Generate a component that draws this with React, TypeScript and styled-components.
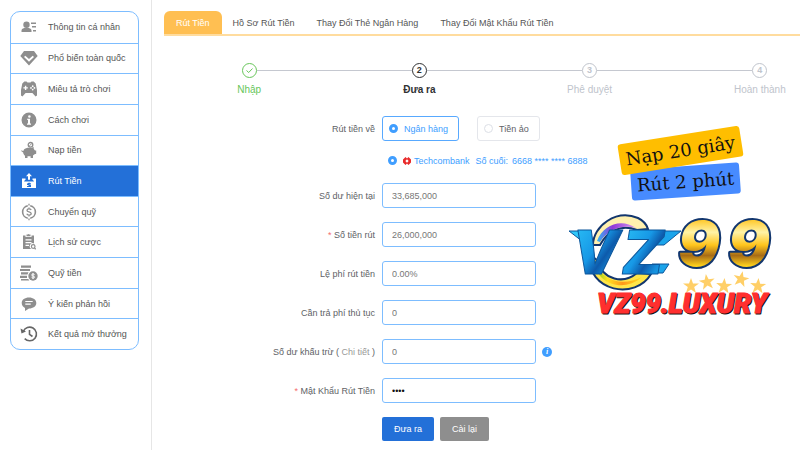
import React from "react";
import styled, { createGlobalStyle, css } from "styled-components";

const GlobalStyle = createGlobalStyle`
  *, *::before, *::after { box-sizing: border-box; }
  body {
    margin: 0;
    background: #fff;
    color: #606266;
    font: 9px/12px "Liberation Sans", Arial, sans-serif;
  }
  button, input { font: inherit; color: inherit; margin: 0; }
`;

const Page = styled.div`
  display: flex;
  min-height: 100vh;
  overflow: hidden;
`;

const Sidebar = styled.nav`
  flex: none;
  width: 152px;
  padding: 11px 12px 11px 10px;
  border-right: 1px solid #e6e6e6;
`;

const Menu = styled.ul`
  display: grid;
  grid-auto-rows: 1fr;
  min-height: 339px;
  margin: 0;
  padding: 0;
  list-style: none;
  border: 1px solid #7dbdff;
  border-radius: 10px;
  overflow: hidden;
`;

const MenuItem = styled.li`
  display: flex;
  & + & { border-top: 1px solid #7dbdff; }
`;

const MenuLink = styled.a<{ $active?: boolean }>`
  flex: 1;
  display: flex;
  align-items: center;
  gap: 10px;
  padding-left: 9px;
  text-decoration: none;
  white-space: nowrap;
  color: ${(p) => (p.$active ? "#fff" : "#555")};
  background: ${(p) => (p.$active ? "#2370d8" : "transparent")};
  svg { flex: none; width: 18px; height: 18px; color: ${(p) => (p.$active ? "#fff" : "#8e8e8e")}; }
`;

const Main = styled.main`
  flex: 1;
  min-width: 0;
  padding: 11px 0 0 12px;
`;

const Tabs = styled.div`
  display: flex;
  border-bottom: 2px solid #ffdc9e;
`;

const Tab = styled.button<{ $active?: boolean }>`
  height: 23px;
  padding: 0 ${(p) => (p.$active ? "12px" : "11px")};
  border: 0;
  border-radius: 6px 6px 0 0;
  white-space: nowrap;
  color: ${(p) => (p.$active ? "#fff" : "#555")};
  background: ${(p) => (p.$active ? "#ffbf52" : "transparent")};
`;

const Steps = styled.ol`
  display: grid;
  grid-template-columns: repeat(4, 1fr);
  margin: 27px -45px 0 0;
  padding: 0;
  list-style: none;
`;

type StepState = "done" | "current" | "waiting";
const stepColors: Record<StepState, string> = {
  done: "#67c65a",
  current: "#303133",
  waiting: "#c0c4cc",
};

const Step = styled.li<{ $state: StepState }>`
  display: grid;
  grid-template-columns: 1fr 15px 1fr;
  align-items: center;
  row-gap: 5px;
  color: ${(p) => stepColors[p.$state]};
  font-weight: ${(p) => (p.$state === "current" ? 700 : 400)};
  &::before, &::after { content: ""; height: 1px; background: #c5c8d0; }
  &::before { order: 0; }
  &::after { order: 2; }
  &:first-child::before, &:last-child::after { background: transparent; }
`;

const StepMark = styled.span`
  order: 1;
  display: grid;
  place-items: center;
  height: 15px;
  border: 1px solid;
  border-radius: 50%;
  font-weight: 700;
  line-height: 13px;
  svg { width: 9px; height: 9px; }
`;

const StepLabel = styled.span`
  order: 3;
  grid-column: 1 / -1;
  text-align: center;
  font-size: 10px;
  line-height: 14px;
`;

const Content = styled.div`
  display: flex;
  margin-top: 19px;
`;

const Form = styled.form`
  flex: 1;
  min-width: 0;
  display: flex;
  flex-direction: column;
  gap: 14px;
`;

const Row = styled.div`
  display: grid;
  grid-template-columns: 211px minmax(0, 1fr);
  column-gap: 7px;
  align-items: center;
`;

const Label = styled.label`
  text-align: right;
  white-space: nowrap;
`;

const Required = styled.span`
  color: #f56c6c;
`;

const DetailLink = styled.a`
  color: #999;
  text-decoration: none;
`;

const Field = styled.div`
  grid-column: 2;
  display: flex;
  align-items: center;
  gap: 6px;
`;

const Choices = styled(Field)`
  gap: 18px;
`;

const Input = styled.input`
  width: 154px;
  height: 25px;
  padding: 0 9px;
  border: 1px solid #7dbdff;
  border-radius: 3px;
  outline: 0;
  background: #fff;
  color: #777;
  &[type="password"] { color: #111; }
`;

const ChoiceBox = styled.label<{ $active?: boolean }>`
  display: flex;
  align-items: center;
  gap: 6px;
  height: 25px;
  padding: 0 10px 0 6px;
  border: 1px solid ${(p) => (p.$active ? "#58a9ff" : "#e4e6eb")};
  border-radius: 3px;
  white-space: nowrap;
  color: ${(p) => (p.$active ? "#409eff" : "#606266")};
`;

const Radio = styled.input`
  appearance: none;
  flex: none;
  width: 9px;
  height: 9px;
  border: 1px solid #dcdfe6;
  border-radius: 50%;
  background: #fff;
  &:checked { border: 3px solid #409eff; }
`;

const BankChoice = styled.label`
  grid-column: 2;
  display: flex;
  align-items: center;
  gap: 6px;
  padding-left: 6px;
  height: 13px;
  white-space: nowrap;
  color: #409eff;
`;

const BankName = styled.span`
  display: flex;
  align-items: center;
  gap: 3px;
  svg { width: 8px; height: 8px; }
`;

const Account = styled.span`
  display: flex;
  gap: 4px;
`;

const Method = styled.div`
  display: flex;
  flex-direction: column;
  gap: 13px;
  margin-bottom: 2px;
`;

const InfoButton = styled.button`
  display: grid;
  place-items: center;
  width: 10px;
  height: 10px;
  padding: 0;
  border: 0;
  border-radius: 50%;
  background: #409eff;
  color: #fff;
  font: italic 700 8px/10px "Liberation Serif", serif;
`;

const Button = styled.button<{ $tone: "primary" | "muted" }>`
  height: 24px;
  padding: 0 12px;
  border: 0;
  border-radius: 2px;
  color: #fff;
  background: ${(p) => (p.$tone === "primary" ? "#2370d8" : "#8e8e8e")};
`;

const Promo = styled.aside`
  flex: none;
  width: 240px;
  padding-top: 19px;
  display: flex;
  flex-direction: column;
  align-items: center;
  svg { width: 100%; display: block; margin-top: 7px; }
`;

const Ribbon = styled.div<{ $tone: "gold" | "blue" }>`
  padding: 0 6px;
  border-radius: 3px;
  color: #111;
  font: 18px/31px "DejaVu Serif", serif;
  white-space: nowrap;
  ${(p) =>
    p.$tone === "gold"
      ? css`background: #ffbe00; transform: rotate(-9deg); z-index: 1;`
      : css`background: #478bff; transform: rotate(-4deg); margin-left: 11px;`}
`;

const Glyph = ({ children }: { children: React.ReactNode }) => (
  <svg viewBox="0 0 18 18" fill="currentColor" aria-hidden="true">{children}</svg>
);

const line = { fill: "none", stroke: "currentColor" };

const menu: { label: string; icon: React.ReactNode; active?: boolean }[] = [
  {
    label: "Thông tin cá nhân",
    icon: <Glyph><circle cx="6.500" cy="6.700" r="3.200" /><path d="M1.500 14v-1.500c0-1.800 2-2.700 5-2.700s5 .9 5 2.700V14zM11 4.500h5V6h-5zM12 8h4v1.500h-4zM13 12h3v1.500h-3z" /></Glyph>,
  },
  {
    label: "Phổ biến toàn quốc",
    icon: <Glyph><path fillRule="evenodd" d="M4 2h10l3.700 5L9 16.500 .3 7zM5.300 6.700 4 8l5 4.800L14 8l-1.300-1.300L9 10z" /></Glyph>,
  },
  {
    label: "Miêu tả trò chơi",
    icon: <Glyph><path fillRule="evenodd" d="M4.300 1.500h2.200l1 1h3l1-1h2.200l2 1.900L17 10v5.600l-1.400.9-3.200-3.500H5.600l-3.200 3.500L1 15.600V10l1.300-6.600zM4.900 5.700v1.500H3.400v1.400h1.500v1.500h1.400V8.600h1.500V7.200H6.300V5.700zM12.700 5.300a.9.9 0 1 0 0 1.800.9.9 0 0 0 0-1.800zm0 3.400a.9.9 0 1 0 0 1.800.9.9 0 0 0 0-1.800zM11 7a.9.9 0 1 0 0 1.800A.9.9 0 0 0 11 7zm3.400 0a.9.9 0 1 0 0 1.800.9.9 0 0 0 0-1.800z" /></Glyph>,
  },
  {
    label: "Cách chơi",
    icon: <Glyph><path fillRule="evenodd" d="M9 1.500a7.500 7.500 0 1 1 0 15 7.500 7.500 0 0 1 0-15zm.4 2.700a1.300 1.300 0 1 0 0 2.600 1.300 1.300 0 0 0 0-2.600zM7 7.700v1.100h1V12.500H7v1.200h4v-1.200h-1V7.700z" /></Glyph>,
  },
  {
    label: "Nạp tiền",
    icon: <Glyph><path d="M4 8.500c1.500-1.800 5-2.300 7.500-1.500l2-1.200.3 2.200 1.200 1.500h1.200v3.200l-1.600.5-1.600 1.300V17h-2.400v-1.700H7.500V17H5v-2.300c-1.200-1-1.800-2.200-1.900-3.500-1 .1-1.700-.6-1.700-1.900h.8c.1.700.5 1 1.100.8z" /><circle cx="10.500" cy="3.800" r="2.300" {...line} strokeWidth="1.300" /><path d="m9.500 4.800 2-2" {...line} /></Glyph>,
  },
  {
    label: "Rút Tiền",
    active: true,
    icon: <Glyph><path fillRule="evenodd" d="M9 1 6 4.300h2v3.500h2V4.300h2zM2 6.500h3.500V8H5l-1 1.500h10L13 8h-.500V6.500H16V16H2zm7 4-2 1.200V13h1.500v1H7v1h4v-2H9.500v-.600H11v-1z" /></Glyph>,
  },
  {
    label: "Chuyển quỹ",
    icon: <Glyph><g {...line}><path strokeWidth="1.600" d="M7.800 2.800a6.300 6.300 0 0 0 0 12.400M10.200 2.800a6.300 6.300 0 0 1 0 12.400" /><path strokeWidth="1.300" d="M11.200 7c-.5-.9-1.200-1.100-2.200-1.100-1.200 0-2 .5-2 1.500 0 2 4.200 1.100 4.200 3.200 0 1-1 1.500-2.100 1.500-1.200 0-2-.5-2.300-1.300M9 4.500V6m0 6v1.500M9 .8v1.700m0 13v1.700" /></g></Glyph>,
  },
  {
    label: "Lịch sử cược",
    icon: <Glyph><path fillRule="evenodd" d="M3 2.500h2.500V4h6V2.500H14v8a3 3 0 0 0-2.500 5.500H3zM5.500 6.200v1.300h6V6.200zm0 2.800v1.300h6V9zm0 2.800V13H9v-1.200zM6.500 1.600h1.200a.9.9 0 0 1 1.600 0h1.200v1.700h-4z" /><circle cx="13.200" cy="13.500" r="1.800" {...line} strokeWidth="1.200" /><path d="m14.500 15 1.200 1.200" {...line} strokeWidth="1.300" /></Glyph>,
  },
  {
    label: "Quỹ tiền",
    icon: <Glyph><path d="M1 1.500h10v2.200H1zM0 4.900h10v2.200H0zM1 8.300h7.500L7.500 10.500H1zM0 11.700h7v2.200H0zM1 15h7.300l1 1.500H1z" /><circle cx="13" cy="12" r="4.700" /><path fill="none" stroke="#fff" d="M14.600 10.700c-.7-1-3-.9-3 .3 0 1.400 3 .7 3 2.100 0 1.200-2.400 1.200-3.100.1M13 9v6" /></Glyph>,
  },
  {
    label: "Ý kiến phản hồi",
    icon: <Glyph><path fillRule="evenodd" d="M9 2.500c4.200 0 7.300 2.300 7.300 5.500s-3.100 5.500-7.300 5.500L5 16v-3.100C3 12 1.700 10.200 1.700 8c0-3.200 3.100-5.500 7.300-5.500zM5.300 6v1.100h7.400V6zm0 2.600v1.100h5.400V8.600z" /></Glyph>,
  },
  {
    label: "Kết quả mở thưởng",
    icon: <Glyph><path fill="none" stroke="#666" strokeWidth="1.600" d="M3.300 6.500A6.800 6.800 0 1 1 4.700 13.600M9.500 5v4.300l3 2.200" /><path fill="#666" d="m.5 3.500 1 5L6 6.500z" /></Glyph>,
  },
];

const tabs = ["Rút Tiền", "Hồ Sơ Rút Tiền", "Thay Đổi Thẻ Ngân Hàng", "Thay Đổi Mật Khẩu Rút Tiền"];

const steps: { label: string; state: StepState }[] = [
  { label: "Nhập", state: "done" },
  { label: "Đưa ra", state: "current" },
  { label: "Phê duyệt", state: "waiting" },
  { label: "Hoàn thành", state: "waiting" },
];

const fields: { id: string; label: React.ReactNode; value: string; required?: boolean; type?: string; info?: boolean }[] = [
  { id: "balance", label: "Số dư hiện tại", value: "33,685,000" },
  { id: "amount", label: "Số tiền rút", value: "26,000,000", required: true },
  { id: "fee", label: "Lệ phí rút tiền", value: "0.00%" },
  { id: "charge", label: "Cần trả phí thủ tục", value: "0" },
  { id: "deduct", label: <>Số dư khấu trừ ( <DetailLink href="#detail">Chi tiết</DetailLink> )</>, value: "0", info: true },
  { id: "password", label: "Mật Khẩu Rút Tiền", value: "1234", required: true, type: "password" },
];

const star = "M0-8 2-2.500 8-2.500 3.200 1 5 7 0 3.500-5 7-3.200 1-8-2.500-2-2.500z";
const stars = [
  [131, 82, 0],
  [147, 78, -8],
  [164, 82, 4],
  [181, 75, 12],
  [198, 82, 4],
];

const BrandLogo = () => (
  <svg viewBox="0 0 240 120" role="img" aria-label="VZ99.LUXURY">
    <defs>
      <linearGradient id="blue" x1="0" y1="0" x2="1" y2="1">
        <stop offset="0" stopColor="#2fc9fa" />
        <stop offset=".45" stopColor="#1798e6" />
        <stop offset=".6" stopColor="#0d5aab" />
        <stop offset=".75" stopColor="#1590de" />
        <stop offset="1" stopColor="#20b8f3" />
      </linearGradient>
      <linearGradient id="gold" x1="0" y1="0" x2="0" y2="1">
        <stop offset=".15" stopColor="#ffbf12" />
        <stop offset=".35" stopColor="#fff3a6" />
        <stop offset=".52" stopColor="#ffc51c" />
        <stop offset=".66" stopColor="#a86c16" />
        <stop offset=".8" stopColor="#ffd21d" />
      </linearGradient>
      <linearGradient id="ringTop" x1="0" x2="1">
        <stop offset="0" stopColor="#31b4f4" />
        <stop offset=".4" stopColor="#9138d8" />
        <stop offset="1" stopColor="#d89af0" />
      </linearGradient>
      <linearGradient id="ringBottom" x1="0" x2="1">
        <stop offset="0" stopColor="#62c61c" />
        <stop offset=".3" stopColor="#ffe022" />
        <stop offset=".6" stopColor="#ff981a" />
        <stop offset="1" stopColor="#ffe022" />
      </linearGradient>
    </defs>
    <path d="M33 41C33 22 56 5 78 14q8 4 10 11L77 26C62 20 48 26 40 41z" fill="#fff0ae" stroke="#12366e" strokeWidth="2" />
    <path d="M37 37C43 20 62 14 76 24 61 20 48 26 40 38z" fill="url(#ringTop)" />
    <path d="M29 50C27 89 76 96 91 70L77 69C64 80 43 77 37 56z" fill="#ffe54a" stroke="#12366e" strokeWidth="2" />
    <path d="M33 55C36 81 64 89 82 73 64 82 43 79 35 58z" fill="url(#ringBottom)" />
    <path d="M9 27h14l4 14z" fill="#2fc9fa" stroke="#0d579c" strokeLinejoin="round" />
    <path d="M98 27h23l-17 14H90z" fill="#1ba4ea" stroke="#0d579c" strokeLinejoin="round" />
    <path d="M92 60h17l-6 9H88z" fill="#1ba4ea" stroke="#0d579c" strokeLinejoin="round" />
    <g fontFamily="Inter" fontWeight="900" fontStyle="italic" strokeLinejoin="round">
      <g fontSize="60" fill="url(#blue)" stroke="#0d579c">
        <text x="12" y="70">V</text>
        <text x="62" y="70">Z</text>
      </g>
      <g fontSize="62" fill="url(#gold)" stroke="#12366e" strokeWidth="4" paintOrder="stroke">
        <text x="118" y="62">9</text>
        <text x="168" y="62">9</text>
      </g>
    </g>
    {stars.map(([x, y, r]) => (
      <path key={x} d={star} fill="#ffcf67" transform={`translate(${x} ${y}) rotate(${r})`} />
    ))}
    <g fontFamily="Roboto" fontWeight="900" fontStyle="italic" fontSize="27" strokeLinejoin="round">
      <text x="38" y="110" fill="#111" stroke="#111" aria-hidden="true">VZ99.LUXURY</text>
      <text x="37" y="109" fill="#ff2f2f" stroke="#ff2f2f">VZ99.LUXURY</text>
    </g>
  </svg>
);

export default function App() {
  return (
    <>
      <GlobalStyle />
      <Page>
        <Sidebar>
          <Menu>
            {menu.map((item) => (
              <MenuItem key={item.label}>
                <MenuLink href="#" $active={item.active}>
                  {item.icon}
                  {item.label}
                </MenuLink>
              </MenuItem>
            ))}
          </Menu>
        </Sidebar>
        <Main>
          <Tabs role="tablist">
            {tabs.map((label, i) => (
              <Tab key={label} type="button" role="tab" aria-selected={i === 0} $active={i === 0}>{label}</Tab>
            ))}
          </Tabs>
          <Steps>
            {steps.map((step, i) => (
              <Step key={step.label} $state={step.state}>
                <StepMark>
                  {step.state === "done" ? (
                    <svg viewBox="0 0 9 9" fill="none" stroke="currentColor"><path d="m1.500 4.500 2.200 2 3.800-4" /></svg>
                  ) : (
                    i + 1
                  )}
                </StepMark>
                <StepLabel>{step.label}</StepLabel>
              </Step>
            ))}
          </Steps>
          <Content>
            <Form onSubmit={(e) => e.preventDefault()}>
              <Method>
                <Row role="radiogroup" aria-labelledby="method-label">
                  <Label as="span" id="method-label">Rút tiền về</Label>
                  <Choices>
                    <ChoiceBox $active><Radio type="radio" name="method" defaultChecked />Ngân hàng</ChoiceBox>
                    <ChoiceBox><Radio type="radio" name="method" />Tiền ảo</ChoiceBox>
                  </Choices>
                </Row>
                <Row>
                  <BankChoice>
                    <Radio type="radio" name="bank" defaultChecked />
                    <BankName>
                      <svg viewBox="0 0 8 8" aria-hidden="true">
                        <path fill="#e92b2b" fillRule="evenodd" d="M2.500 0 4 1.500 5.500 0 8 2.500v3L5.500 8 4 6.500 2.500 8 0 5.500v-3zM4 2.300 2.300 4 4 5.700 5.700 4z" />
                      </svg>
                      Techcombank
                    </BankName>
                    <Account><span>Số cuối:</span><span>6668 **** **** 6888</span></Account>
                  </BankChoice>
                </Row>
              </Method>
              {fields.map((f) => (
                <Row key={f.id}>
                  <Label htmlFor={f.id}>{f.required && <Required>* </Required>}{f.label}</Label>
                  <Field>
                    <Input id={f.id} type={f.type ?? "text"} defaultValue={f.value} />
                    {f.info && <InfoButton type="button" aria-label="Chi tiết">i</InfoButton>}
                  </Field>
                </Row>
              ))}
              <Row>
                <Field>
                  <Button type="submit" $tone="primary">Đưa ra</Button>
                  <Button type="reset" $tone="muted">Cài lại</Button>
                </Field>
              </Row>
            </Form>
            <Promo>
              <Ribbon $tone="gold">Nạp 20 giây</Ribbon>
              <Ribbon $tone="blue">Rút 2 phút</Ribbon>
              <BrandLogo />
            </Promo>
          </Content>
        </Main>
      </Page>
    </>
  );
}
